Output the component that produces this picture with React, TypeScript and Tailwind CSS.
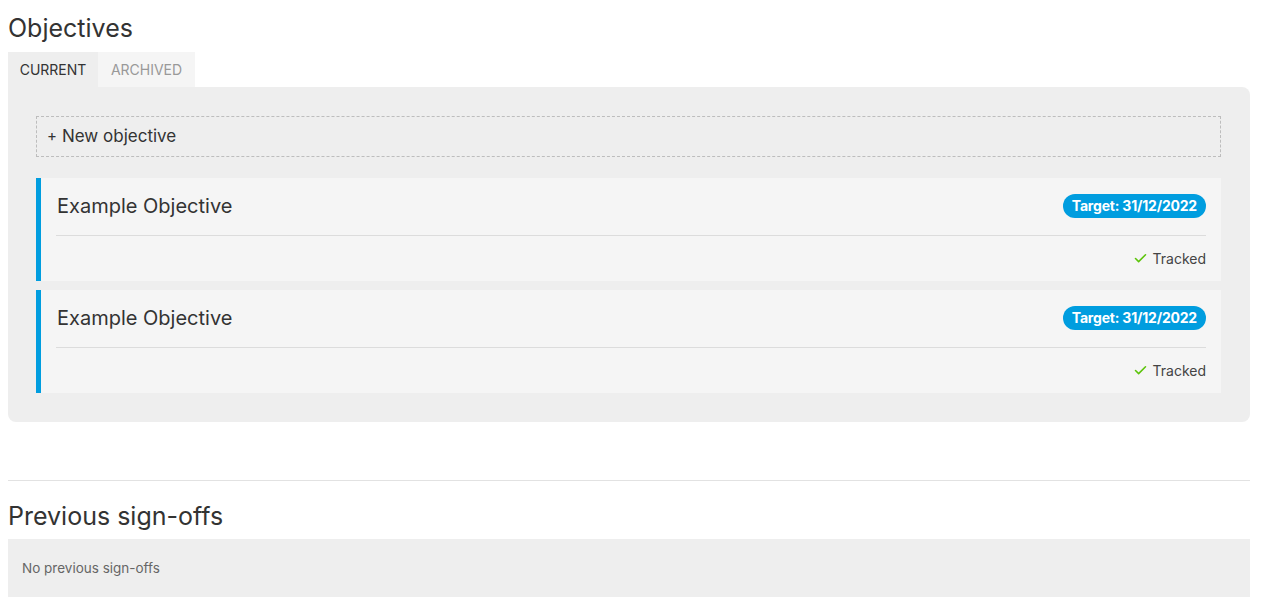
import { Check } from 'lucide-react';

const objectives = [
  { title: 'Example Objective', target: '31/12/2022' },
  { title: 'Example Objective', target: '31/12/2022' },
];

function ObjectiveCard({ title, target }: { title: string; target: string }) {
  return (
    <div className="bg-[#f5f5f5] border-l-[5px] border-[#009ddf] px-[15px]">
      <div className="flex items-center justify-between h-[58px] border-b border-[#dcdcdc]">
        <h3 className="text-[20px] text-[#333] pl-px -mt-[2px]">{title}</h3>
        <span className="bg-[#009ddf] text-white text-[14px] font-bold rounded-full px-[9px] h-[24px] leading-[24px] -mt-[2px] tracking-[-0.2px]">
          Target: {target}
        </span>
      </div>
      <div className="flex items-center justify-end h-[45px] gap-[5px] text-[14px] text-[#444]">
        <Check className="w-[15px] h-[15px] text-[#5cc40a]" strokeWidth={2.5} />
        <span>Tracked</span>
      </div>
    </div>
  );
}

export default function App() {
  return (
    <div className="px-2 w-[1258px] font-['Inter',sans-serif] text-[#333]">
      <h2 className="text-[25px] leading-[28px] pt-[14px] pb-[10px]">Objectives</h2>
      <div className="flex text-[14px] uppercase">
        <div className="bg-[#eeeeee] h-[35px] w-[90px] flex items-center justify-center text-[#333]">Current</div>
        <div className="bg-[#f5f5f5] h-[35px] w-[97px] flex items-center justify-center text-[#999]">Archived</div>
      </div>
      <div className="bg-[#eeeeee] rounded-b-lg rounded-tr-lg pl-[28px] pr-[29px] pt-[29px] pb-[29px]">
        <div className="h-[41px] border border-dashed border-[#bdbdbd] flex items-center px-[10px] text-[17px] text-[#333] gap-[5px]">
          <span className="text-[15px]">+</span>
          <span>New objective</span>
        </div>
        <div className="mt-[21px] flex flex-col gap-[9px]">
          {objectives.map((o, i) => (
            <ObjectiveCard key={i} title={o.title} target={o.target} />
          ))}
        </div>
      </div>
      <div className="mt-[58px] border-t border-[#e2e2e2]" />
      <h2 className="text-[25px] leading-[28px] pt-[21px] pb-[9px]">Previous sign-offs</h2>
      <div className="bg-[#eeeeee] h-[58px] flex items-center px-[14px] text-[13.5px] text-[#666]">
        No previous sign-offs
      </div>
    </div>
  );
}
